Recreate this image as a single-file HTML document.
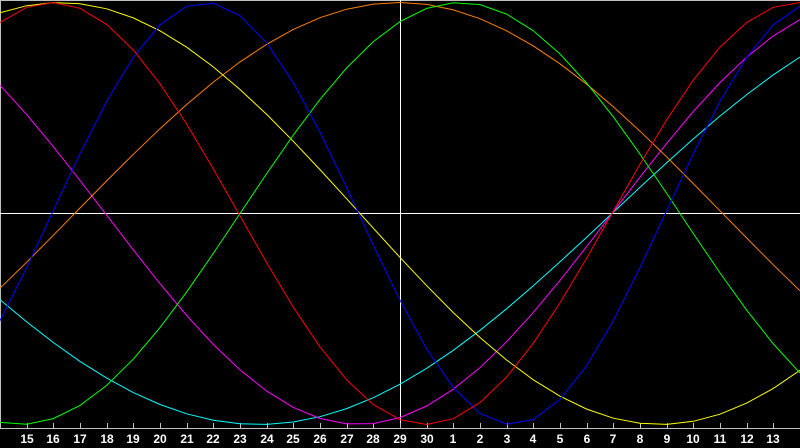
<!DOCTYPE html>
<html><head><meta charset="utf-8"><style>
html,body{margin:0;padding:0;background:#000;width:800px;height:448px;overflow:hidden}
svg{display:block}
text{font-family:"Liberation Sans",sans-serif;font-weight:bold;font-size:12px;fill:#fff}
</style></head><body>
<svg id="s" width="800" height="448" xmlns="http://www.w3.org/2000/svg">
<rect width="800" height="448" fill="#000"/>
<line x1="0" y1="0.5" x2="800" y2="0.5" stroke="#c0c0c0"/>
<line x1="0.5" y1="0" x2="0.5" y2="428" stroke="#c0c0c0"/>
<line x1="0" y1="428.5" x2="800" y2="428.5" stroke="#c0c0c0"/>
<line x1="0" y1="213.5" x2="800" y2="213.5" stroke="#fff"/>
<line x1="400.5" y1="0" x2="400.5" y2="428" stroke="#fff"/>
<g id="ticks"></g>
<g id="curves" fill="none" stroke-width="1"></g>
<g text-anchor="middle">
<text x="27" y="443">15</text><text x="53" y="443">16</text><text x="80" y="443">17</text><text x="107" y="443">18</text><text x="133" y="443">19</text><text x="160" y="443">20</text><text x="187" y="443">21</text><text x="213" y="443">22</text><text x="240" y="443">23</text><text x="267" y="443">24</text><text x="293" y="443">25</text><text x="320" y="443">26</text><text x="347" y="443">27</text><text x="373" y="443">28</text><text x="400" y="443">29</text><text x="427" y="443">30</text><text x="453" y="443">1</text><text x="480" y="443">2</text><text x="507" y="443">3</text><text x="533" y="443">4</text><text x="560" y="443">5</text><text x="587" y="443">6</text><text x="613" y="443">7</text><text x="640" y="443">8</text><text x="667" y="443">9</text><text x="693" y="443">10</text><text x="720" y="443">11</text><text x="747" y="443">12</text><text x="773" y="443">13</text>
</g>
</svg>
<script>
var NS="http://www.w3.org/2000/svg",d=800/30,mid=213.5,A=211;
var t=document.getElementById("ticks"),c=document.getElementById("curves");
for(var k=1;k<30;k++){var l=document.createElementNS(NS,"line");var x=Math.round(k*d)+0.5;
l.setAttribute("x1",x);l.setAttribute("x2",x);l.setAttribute("y1",423);l.setAttribute("y2",428);l.setAttribute("stroke","#c0c0c0");t.appendChild(l);}
var C=[["#00ffff",53,22.95],["#ff00ff",38,22.95],["#ff8000",48.6,2.8],["#ffff00",45,13.5-22.5],["#00ff00",33,25.5-16.5],["#0000ff",23,24.95],["#ff0000",28,22.95]];
C.forEach(function(p){var pts=[];for(var k=0;k<=30;k++){var y=mid-A*Math.sin(2*Math.PI*(k-p[2])/p[1]);pts.push((k*d).toFixed(1)+","+y.toFixed(1));}
var pl=document.createElementNS(NS,"polyline");pl.setAttribute("points",pts.join(" "));pl.setAttribute("stroke",p[0]);c.appendChild(pl);});
</script>
</body></html>
